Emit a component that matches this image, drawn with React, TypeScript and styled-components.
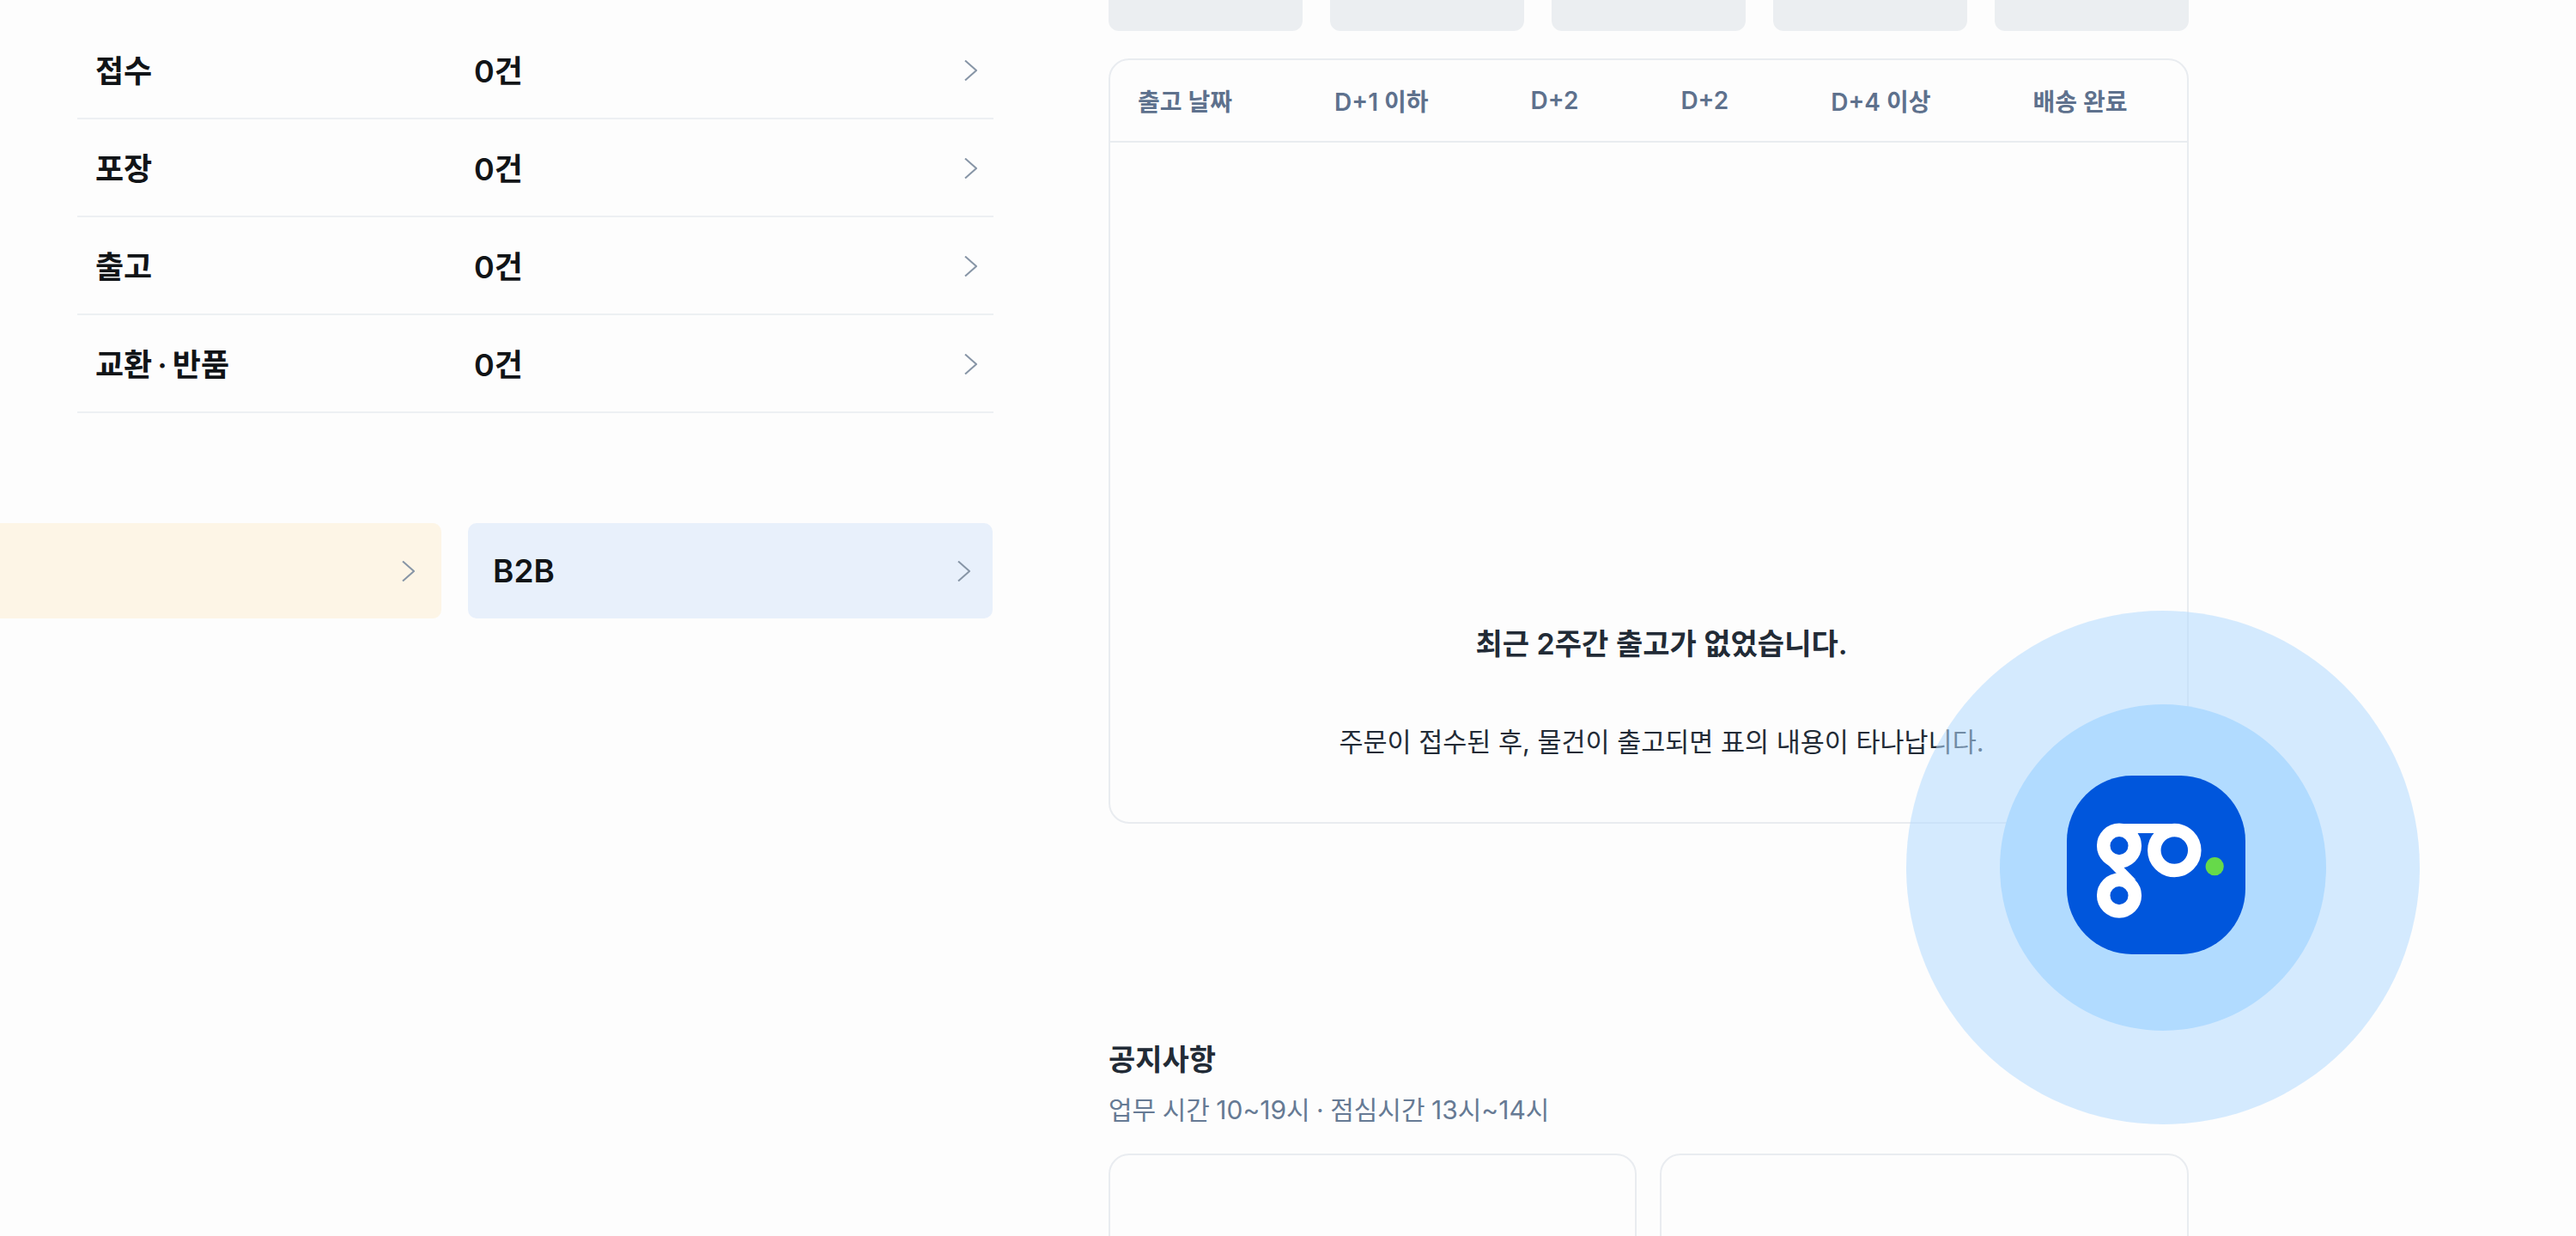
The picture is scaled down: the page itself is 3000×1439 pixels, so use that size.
import React from "react";
import styled, { createGlobalStyle } from "styled-components";

const GlobalStyle = createGlobalStyle`
  html, body {
    margin: 0;
    padding: 0;
    height: 1439px;
    overflow: hidden;
    background: #fdfdfd;
    font-family: Inter, "Noto Sans CJK KR", sans-serif;
  }
`;

const statusRows = ["접수", "포장", "출고", "교환 · 반품"];
const columns = ["출고 날짜", "D+1 이하", "D+2", "D+2", "D+4 이상", "배송 완료"];

function Chevron() {
  return (
    <ChevronIcon viewBox="0 0 15 24" fill="none" stroke="#8795a6" strokeWidth="2">
      <polyline points="1,0.5 14,12 1,23.5" />
    </ChevronIcon>
  );
}

function GoLogo() {
  return (
    <LogoSvg viewBox="0 0 208 208">
      <rect width="208" height="208" rx="76" fill="#0056dc" />
      <g fill="none" stroke="#fff" strokeWidth="15.5">
        <circle cx="61" cy="81.6" r="18.3" />
        <circle cx="61" cy="139.6" r="18.3" />
        <circle cx="125.3" cy="87" r="23.5" />
      </g>
      <rect x="61" y="56" width="64" height="11" fill="#fff" />
      <polygon points="41.6,97.6 58,114 80.4,121.2 64,104.5" fill="#fff" />
      <circle cx="172.2" cy="105.7" r="10.6" fill="#66d94a" />
    </LogoSvg>
  );
}

export default function App() {
  return (
    <Page>
      <GlobalStyle />
      <LeftColumn>
        <StatusList>
          {statusRows.map((label) => (
            <StatusRow key={label}>
              <StatusLabel>{label}</StatusLabel>
              <StatusValue>0건</StatusValue>
              <Chevron />
            </StatusRow>
          ))}
        </StatusList>
        <LinkCards>
          <LinkCard $bg="#fdf5e6" $inset={31}>
            <span />
            <Chevron />
          </LinkCard>
          <LinkCard $bg="#e8f0fb" $inset={26}>
            <LinkLabel>B2B</LinkLabel>
            <Chevron />
          </LinkCard>
        </LinkCards>
      </LeftColumn>

      <RightColumn>
        <TileRow>
          {[0, 1, 2, 3, 4].map((i) => (
            <Tile key={i} />
          ))}
        </TileRow>

        <ShipTable>
          <ShipHeader>
            {columns.map((c, i) => (
              <ShipHeadCell key={i}>{c}</ShipHeadCell>
            ))}
          </ShipHeader>
          <EmptyBody>
            <EmptyTitle>최근 2주간 출고가 없었습니다.</EmptyTitle>
            <EmptyText>주문이 접수된 후, 물건이 출고되면 표의 내용이 타나납니다.</EmptyText>
          </EmptyBody>
        </ShipTable>

        <NoticeTitle>공지사항</NoticeTitle>
        <NoticeSub>업무 시간 10~19시 · 점심시간 13시~14시</NoticeSub>
        <NoticeGrid>
          <NoticeCard />
          <NoticeCard />
        </NoticeGrid>
      </RightColumn>

      <FloatingOuter>
        <FloatingInner>
          <GoLogo />
        </FloatingInner>
      </FloatingOuter>
    </Page>
  );
}

const Page = styled.div`
  position: relative;
  display: flex;
  gap: 134px;
  width: 3000px;
  height: 1439px;
  padding-left: 90px;
  box-sizing: border-box;
  overflow: hidden;
  background: #fdfdfd;
`;

const LeftColumn = styled.div`
  display: flex;
  flex-direction: column;
  width: 1067px;
  flex: none;
  padding-top: 25px;
`;

const StatusList = styled.div`
  display: flex;
  flex-direction: column;
`;

const StatusRow = styled.div`
  display: grid;
  grid-template-columns: 441px 1fr auto;
  align-items: center;
  box-sizing: border-box;
  height: 114px;
  padding: 0 19px 0 21px;
  border-bottom: 2px solid #edf0f3;
`;

const StatusLabel = styled.div`
  font-size: 36px;
  font-weight: 600;
  color: #111417;
  word-spacing: -3px;
  margin-top: -2px;
`;

const StatusValue = styled(StatusLabel)``;

const ChevronIcon = styled.svg`
  width: 15px;
  height: 24px;
  flex: none;
  margin-top: 2px;
`;

const LinkCards = styled.div`
  display: flex;
  justify-content: flex-end;
  gap: 31px;
  margin-top: 128px;
  margin-right: 1px;
`;

const LinkCard = styled.div<{ $bg: string; $inset: number }>`
  display: flex;
  align-items: center;
  justify-content: space-between;
  flex: none;
  box-sizing: border-box;
  width: 611px;
  height: 111px;
  padding: 0 ${(p) => p.$inset}px 0 29px;
  border-radius: 10px;
  background: ${(p) => p.$bg};

  ${ChevronIcon} {
    margin-top: 0;
  }
`;

const LinkLabel = styled.div`
  font-size: 37px;
  font-weight: 600;
  color: #111417;
`;

const RightColumn = styled.div`
  display: flex;
  flex-direction: column;
  width: 1258px;
  flex: none;
`;

const TileRow = styled.div`
  display: flex;
  flex: none;
  gap: 32px;
`;

const Tile = styled.div`
  width: 226px;
  height: 36px;
  border-radius: 0 0 12px 12px;
  background: #ebeef1;
`;

const ShipTable = styled.div`
  display: flex;
  flex-direction: column;
  flex: none;
  box-sizing: border-box;
  height: 891px;
  margin-top: 32px;
  border: 2px solid #e9ecf0;
  border-radius: 24px;
`;

const ShipHeader = styled.div`
  display: flex;
  align-items: center;
  gap: 119px;
  box-sizing: border-box;
  height: 96px;
  padding-left: 32px;
  border-bottom: 2px solid #e9ecf0;
`;

const ShipHeadCell = styled.div`
  font-size: 28px;
  font-weight: 600;
  color: #5e718d;
  white-space: nowrap;
`;

const EmptyBody = styled.div`
  flex: 1;
  display: flex;
  flex-direction: column;
  align-items: center;
  justify-content: flex-end;
  padding: 0 0 71px 30px;
`;

const EmptyTitle = styled.div`
  font-size: 34px;
  font-weight: 600;
  line-height: 44px;
  color: #222b36;
`;

const EmptyText = styled.div`
  margin-top: 70px;
  font-size: 30.5px;
  line-height: 44px;
  color: #222b36;
`;

const NoticeTitle = styled.div`
  flex: none;
  margin-top: 253px;
  font-size: 34px;
  font-weight: 600;
  line-height: 44px;
  color: #222b36;
`;

const NoticeSub = styled.div`
  flex: none;
  margin-top: 14px;
  font-size: 30px;
  line-height: 44px;
  word-spacing: -1px;
  color: #667a94;
`;

const NoticeGrid = styled.div`
  display: grid;
  flex: none;
  grid-template-columns: 615px 616px;
  gap: 27px;
  margin-top: 29px;
`;

const NoticeCard = styled.div`
  height: 200px;
  border: 2px solid #e9ecf0;
  border-radius: 24px;
`;

const FloatingOuter = styled.div`
  position: absolute;
  left: 2220px;
  top: 711px;
  width: 598px;
  height: 598px;
  border-radius: 50%;
  background: rgba(178, 219, 255, 0.55);
  display: flex;
  align-items: center;
  justify-content: center;
`;

const FloatingInner = styled.div`
  position: relative;
  width: 380px;
  height: 380px;
  border-radius: 50%;
  background: #b1dbff;
`;

const LogoSvg = styled.svg`
  position: absolute;
  left: 78px;
  top: 83px;
  width: 208px;
  height: 208px;
`;
